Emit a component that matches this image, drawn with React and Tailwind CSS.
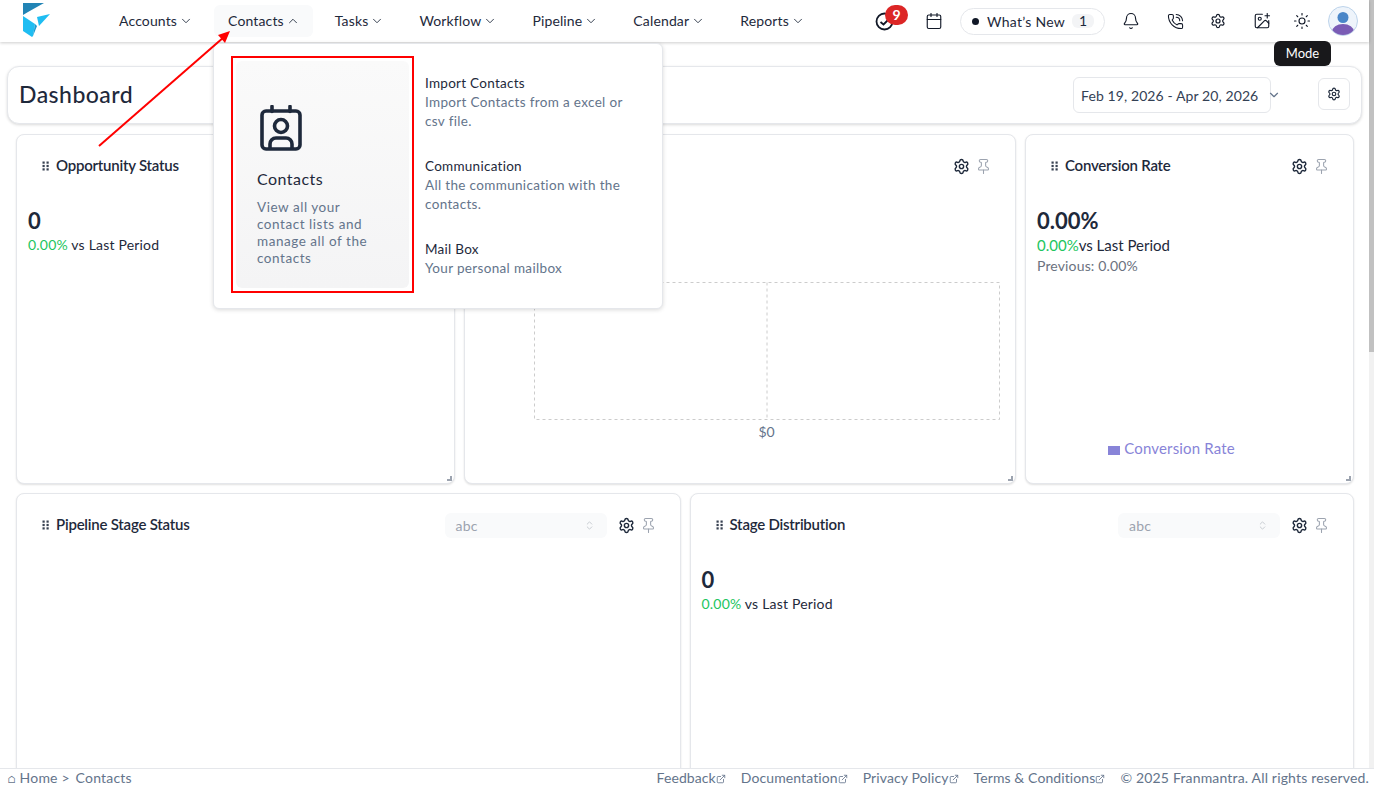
import {
  Bell,
  Calendar,
  ChevronDown,
  ChevronUp,
  ChevronsUpDown,
  ExternalLink,
  ImagePlus,
  PhoneCall,
  Pin,
  Settings,
  Sun,
} from "lucide-react";

const navItems = ["Accounts", "Contacts", "Tasks", "Workflow", "Pipeline", "Calendar", "Reports"];

const subLinks = [
  { title: "Import Contacts", desc: ["Import Contacts from a excel or", "csv file."] },
  { title: "Communication", desc: ["All the communication with the", "contacts."] },
  { title: "Mail Box", desc: ["Your personal mailbox"] },
];

function Logo() {
  return (
    <svg width="30" height="38" viewBox="0 0 30 38" className="ml-[22px] mt-[2px] shrink-0">
      <polygon points="1,1 22,1 6,10 1,13" fill="#2284b5" />
      <polygon points="1,14 13,22 11,34 10,35 1,29" fill="#1fbdf2" />
      <polygon points="28,12 17,24 15,15" fill="#1fbdf2" />
      <polygon points="13,22 15,24 11,34" fill="#1a9ad0" />
    </svg>
  );
}

function GripDots() {
  return (
    <svg width="8" height="10" viewBox="0 0 8 10" className="shrink-0 text-[#374151]" fill="currentColor">
      <rect x="0.5" y="0.5" width="2.2" height="2.2" />
      <rect x="4.5" y="0.5" width="2.2" height="2.2" />
      <rect x="0.5" y="3.9" width="2.2" height="2.2" />
      <rect x="4.5" y="3.9" width="2.2" height="2.2" />
      <rect x="0.5" y="7.3" width="2.2" height="2.2" />
      <rect x="4.5" y="7.3" width="2.2" height="2.2" />
    </svg>
  );
}

function CardTools() {
  return (
    <div className="flex items-center gap-[5px]">
      <Settings size={17} strokeWidth={2} className="text-[#1e293b]" />
      <Pin size={17} strokeWidth={1.5} className="text-[#9ca3af]" />
    </div>
  );
}

function AbcSelect() {
  return (
    <div className="flex h-[25px] w-[162px] items-center justify-between rounded-md bg-[#f9fafb] pl-[11px] pr-[12px] text-[14px] tracking-[0.02em] text-[#9ca3af]">
      abc
      <ChevronsUpDown size={11} className="text-[#c4c8ce]" />
    </div>
  );
}

function Card({ title, select, children }) {
  return (
    <div className="relative h-[350px] rounded-lg border border-[#e5e7eb] bg-white shadow-[0_1px_2px_rgba(0,0,0,0.12)]">
      <div className="mt-[19px] flex h-[25px] items-center justify-between pl-[25px] pr-[23px]">
        <div className="flex items-center gap-[6px] pb-[2px] text-[15px] font-semibold tracking-[-0.015em] text-[#1e293b]">
          {title && <GripDots />}
          {title}
        </div>
        <div className="flex items-center gap-[11px]">
          {select && <AbcSelect />}
          <CardTools />
        </div>
      </div>
      {children}
      <span className="absolute bottom-[2px] right-[2px] h-[5px] w-[5px] border-b-2 border-r-2 border-[#9ca3af]" />
    </div>
  );
}

function Stat({ value }) {
  return (
    <div className="px-[11px] pt-[28px]">
      <div className="text-[22px] font-bold leading-[28px] text-[#1e293b]">{value}</div>
      <div className="text-[14px] leading-[20px] tracking-[0.014em] text-[#1e293b]">
        <span className="text-[#22c55e]">0.00%</span> vs Last Period
      </div>
    </div>
  );
}

function ContactsMenu() {
  return (
    <div className="absolute left-[213px] top-[43px] z-20 flex h-[266px] w-[450px] rounded-md border border-[#e5e7eb] bg-white shadow-[0_1px_4px_rgba(0,0,0,0.15)]">
      <div className="ml-[17px] mt-[12px] flex h-[237px] w-[183px] shrink-0 border-2 border-[#ff0000] p-[3px]">
        <div className="flex flex-1 flex-col rounded-md bg-gradient-to-b from-[#fafafa] to-[#f4f4f5] pl-[21px] pt-[44px]">
          <svg width="44" height="48" viewBox="0 0 44 48" fill="none" stroke="#1e293b" strokeWidth="3.6" className="ml-[3px]">
            <rect x="2" y="6" width="38" height="38" rx="4" />
            <path d="M12 1.5v5M30 1.5v5" strokeLinecap="round" />
            <circle cx="21" cy="21" r="6.5" />
            <path d="M10 44v-5a6 6 0 0 1 6-6h10a6 6 0 0 1 6 6v5" />
          </svg>
          <div className="mt-[16px] text-[16px] leading-[20px] tracking-[0.03em] text-[#1e293b]">Contacts</div>
          <div className="mt-[10px] text-[13.5px] leading-[17px] tracking-[0.04em] text-[#64748b]">
            View all your
            <br />
            contact lists and
            <br />
            manage all of the
            <br />
            contacts
          </div>
        </div>
      </div>
      <div className="ml-[11px] flex flex-col gap-[26px] pt-[30px]">
        {subLinks.map((link) => (
          <div key={link.title} className="text-[13.5px] leading-[19px] tracking-[0.02em]">
            <div className="text-[#1e293b]">{link.title}</div>
            {link.desc.map((line) => (
              <div key={line} className="tracking-[0.025em] text-[#64748b]">
                {line}
              </div>
            ))}
          </div>
        ))}
      </div>
    </div>
  );
}

function Header() {
  return (
    <header className="relative z-10 flex h-[42px] shrink-0 bg-white pr-[11px] shadow-[0_1px_3px_rgba(0,0,0,0.2)]">
      <Logo />
      <nav className="ml-[53px] mt-[5px] flex h-[32px] gap-2 text-[14px] tracking-[0.01em] text-[#1e293b]">
        {navItems.map((item) => (
          <div
            key={item}
            className={`flex items-center gap-[2px] rounded-md pb-[2px] pl-[14px] pr-[13px] ${item === "Contacts" ? "bg-[#f9fafb]" : ""}`}
          >
            {item}
            {item === "Contacts" ? (
              <ChevronUp size={14} strokeWidth={1.5} className="mt-[2px]" />
            ) : (
              <ChevronDown size={14} strokeWidth={1.5} className="mt-[2px]" />
            )}
          </div>
        ))}
      </nav>
      <div className="ml-auto flex items-center text-[#111827]">
        <div className="relative mr-[31px]">
          <svg width="19" height="19" viewBox="0 0 19 19" fill="none" stroke="#111827" strokeWidth="1.8">
            <circle cx="9.5" cy="9.5" r="8" />
            <path d="M5.5 10l3 2.5 4.5-4.5" />
          </svg>
          <span className="absolute -top-[7px] left-[10px] flex h-[20px] w-[23px] items-center justify-center rounded-full bg-[#dc2626] text-[14px] font-bold text-white">
            9
          </span>
        </div>
        <Calendar size={18} strokeWidth={1.5} />
        <div className="ml-[17px] flex h-[27px] w-[145px] items-center rounded-full border border-[#e5e7eb] pl-[11px] text-[14px] tracking-[0.02em] text-[#1e293b]">
          <span className="h-[7px] w-[7px] rounded-full bg-[#111827]" />
          <span className="ml-[8px]">What’s New</span>
          <span className="ml-[7px] rounded-md bg-[#f3f4f6] px-[7px] text-[14px] leading-[14px]">1</span>
        </div>
        <Bell size={18} strokeWidth={1.5} className="ml-[17px]" />
        <PhoneCall size={17} strokeWidth={1.5} className="ml-[27px]" />
        <Settings size={16} strokeWidth={1.8} className="ml-[26px]" />
        <ImagePlus size={18} strokeWidth={1.5} className="ml-[27px]" />
        <Sun size={18} strokeWidth={1.5} className="ml-[22px]" />
        <svg width="30" height="30" viewBox="0 0 30 30" className="ml-[17px]">
          <defs>
            <clipPath id="avatar-clip">
              <circle cx="15" cy="15" r="14" />
            </clipPath>
          </defs>
          <circle cx="15" cy="15" r="14.5" fill="#eef4fb" stroke="#bcd3ea" />
          <g clipPath="url(#avatar-clip)">
            <circle cx="15" cy="11.5" r="5.5" fill="#4a86c8" />
            <ellipse cx="15" cy="26" rx="11" ry="8" fill="#7a5cb5" />
          </g>
        </svg>
      </div>
    </header>
  );
}

export default function App() {
  return (
    <div className="relative flex h-screen flex-col overflow-hidden bg-white font-[Lato,sans-serif]">
      <div className="flex min-h-0 flex-1">
        <div className="flex min-w-0 flex-1 flex-col">
          <Header />
          <main className="min-h-0 flex-1 overflow-hidden">
            {/* page title bar */}
            <div className="mx-[7px] mt-[24px] flex h-[58px] items-center rounded-xl border border-[#e5e7eb] bg-white pl-[11px] pr-[11px] shadow-[0_1px_3px_rgba(0,0,0,0.15)]">
              <h1 className="mb-[2px] text-[23px] font-medium tracking-[0.02em] text-[#1e293b]">Dashboard</h1>
              <div className="ml-auto flex h-[36px] w-[198px] items-center rounded-md border border-[#e5e7eb] pl-[7px] text-[14px] tracking-[0.007em] text-[#334155]">
                Feb 19, 2026 - Apr 20, 2026
              </div>
              <ChevronDown size={14} className="-ml-[4px] text-[#64748b]" />
              <div className="mb-[2px] ml-[37px] flex h-[32px] w-[32px] items-center justify-center rounded-md border border-[#e5e7eb]">
                <Settings size={14} className="text-[#1e293b]" />
              </div>
            </div>

            <div className="ml-[16px] mr-[15px] mt-[10px] flex flex-col gap-[9px]">
              <div className="grid grid-cols-[439px_552px_329px] gap-[9px]">
                <Card title="Opportunity Status">
                  <Stat value="0" />
                </Card>
                <Card>
                  <svg width="470" height="141" className="ml-[68px] mt-[102px]" fill="none" stroke="#ccc" strokeDasharray="3 3">
                    <rect x="1.5" y="1.5" width="465" height="137" />
                    <line x1="234" y1="1.5" x2="234" y2="138.5" />
                  </svg>
                  <div className="ml-[68px] w-[467px] text-center text-[14px] leading-[20px] text-[#64748b]">$0</div>
                </Card>
                <Card title="Conversion Rate">
                  <div className="px-[11px] pt-[28px]">
                    <div className="text-[22px] font-bold leading-[28px] text-[#1e293b]">0.00%</div>
                    <div className="text-[15px] leading-[20px] text-[#1e293b]">
                      <span className="text-[#22c55e]">0.00%</span>vs Last Period
                    </div>
                    <div className="mt-[1px] text-[14px] leading-[20px] tracking-[0.01em] text-[#6b7280]">Previous: 0.00%</div>
                  </div>
                  <div className="mt-[162px] flex items-center justify-center gap-[4px] pr-[36px] text-[15px] leading-[20px] tracking-[0.01em] text-[#8884d8]">
                    <span className="mt-[4px] h-[9px] w-[12px] bg-[#8884d8]" />
                    Conversion Rate
                  </div>
                </Card>
              </div>
              <div className="grid grid-cols-2 gap-[9px]">
                <Card title="Pipeline Stage Status" select />
                <Card title="Stage Distribution" select>
                  <Stat value="0" />
                </Card>
              </div>
            </div>
          </main>
        </div>
        {/* page scrollbar */}
        <div className="w-[5px] shrink-0 bg-[#f1f1f1]">
          <div className="h-[352px] bg-[#c1c1c1]" />
        </div>
      </div>

      <footer className="z-10 flex h-[19px] shrink-0 items-center justify-between border-t border-[#e5e7eb] bg-white pl-[8px] pr-[5px] text-[14px] leading-[18px] text-[#64748b]">
        <div className="tracking-[0.014em]">
          <span className="text-[10px]">⌂</span> Home &gt; <span className="ml-[2px]">Contacts</span>
        </div>
        <div className="flex gap-[15px]">
          {["Feedback", "Documentation", "Privacy Policy", "Terms & Conditions"].map((label) => (
            <span key={label} className="flex items-center tracking-[0.007em]">
              {label}
              <ExternalLink size={10} className="mt-[1px]" />
            </span>
          ))}
          <span className="tracking-[0.012em]">© 2025 Franmantra. All rights reserved.</span>
        </div>
      </footer>

      <ContactsMenu />

      <div className="absolute left-[1274px] top-[41px] z-30 flex h-[25px] w-[57px] items-center justify-center rounded-md bg-[#18181b] text-[13px] text-white">
        Mode
      </div>

      {/* red annotation arrow */}
      <svg className="pointer-events-none absolute left-0 top-0 z-40" width="300" height="160">
        <line x1="99" y1="146" x2="224" y2="37" stroke="#f00" strokeWidth="2" />
        <polygon points="230,31 225,43 218,35" fill="#f00" />
      </svg>
    </div>
  );
}
